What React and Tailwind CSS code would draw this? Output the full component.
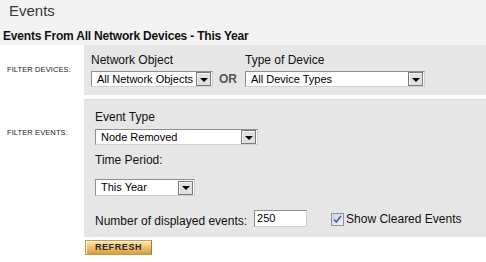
function Arrow() {
  return (
    <span className="flex items-center justify-center w-[15px] h-[14px] border border-[#7a7a7a] bg-[#e0e0e0] shadow-[inset_1px_1px_0_#f7f7f7]">
      <span className="block w-0 h-0 border-l-[4px] border-r-[4px] border-t-[4px] border-l-transparent border-r-transparent border-t-black mt-[1px]"></span>
    </span>
  );
}

function Select({ value, width, height = "h-[16px]" }) {
  return (
    <div className={`flex items-center justify-between bg-white border border-[#8f8f8f] border-b-[#cfcfcf] border-r-[#cfcfcf] pl-[5px] pr-[1px] ${width} ${height}`}>
      <span className="text-[11px] leading-none text-black">{value}</span>
      <Arrow />
    </div>
  );
}

function Label({ children, className = "" }) {
  return <div className={`text-[12px] leading-[14px] text-[#111] ${className}`}>{children}</div>;
}

export default function App() {
  return (
    <div className="w-[486px] h-[262px] bg-white font-['Liberation_Sans',Arial,sans-serif] overflow-hidden">
      <div className="bg-[#f3f3f3] h-[45px] pt-[2px]">
        <div className="pl-[9px] text-[15px] leading-[18px] text-[#3a3a3a]">Events</div>
        <div className="pl-[3px] mt-[9px] text-[12px] leading-[14px] font-bold tracking-[-0.2px] text-[#111]">
          Events From All Network Devices - This Year
        </div>
      </div>

      <div className="flex h-[50px]">
        <div className="w-[84px] flex items-center pl-[7px] text-[7.5px] leading-[8px] tracking-[0.1px] text-[#222]">FILTER DEVICES:</div>
        <div className="flex-1 bg-[#e6e6e6] flex items-end pl-[7px] pb-[8px]">
          <div className="flex flex-col gap-[4px]">
            <Label>Network Object</Label>
            <Select value="All Network Objects" width="w-[122px]" />
          </div>
          <div className="ml-[6px] w-[26px] h-[16px] flex items-center text-[12px] font-bold text-[#555]">OR</div>
          <div className="flex flex-col gap-[4px]">
            <Label>Type of Device</Label>
            <Select value="All Device Types" width="w-[180px]" />
          </div>
        </div>
      </div>

      <div className="flex mt-[4px] h-[138px]">
        <div className="w-[84px] pl-[7px] pt-[30px] text-[7.5px] leading-[8px] tracking-[0.1px] text-[#222]">FILTER EVENTS:</div>
        <div className="flex-1 bg-[#e6e6e6] border-t border-[#dcdcdc] pl-[11px] pt-[10px]">
          <Label>Event Type</Label>
          <div className="mt-[5px]">
            <Select value="Node Removed" width="w-[163px]" />
          </div>
          <Label className="mt-[8px]">Time Period:</Label>
          <div className="mt-[12px]">
            <Select value="This Year" width="w-[100px]" height="h-[17px]" />
          </div>
          <div className="flex items-center mt-[14px] h-[17px]">
            <span className="text-[12px] leading-[14px] text-[#111] mt-[4px]">Number of displayed events:</span>
            <div className="ml-[7px] w-[53px] h-[17px] bg-white border border-[#8f8f8f] border-b-[#cfcfcf] border-r-[#cfcfcf] flex items-center pl-[2px] text-[11px] text-black">
              250
            </div>
            <svg className="ml-[24px] mt-[1px]" width="13" height="13" viewBox="0 0 13 13">
              <defs>
                <linearGradient id="cb" x1="0" y1="0" x2="1" y2="1">
                  <stop offset="0" stopColor="#cfd0dc" />
                  <stop offset="1" stopColor="#f4f4f8" />
                </linearGradient>
              </defs>
              <rect x="0.5" y="0.5" width="12" height="12" fill="url(#cb)" stroke="#8a93a4" />
              <path d="M3 6.5 L5.3 9 L10 3" fill="none" stroke="#3a64ae" strokeWidth="1.6" />
            </svg>
            <span className="ml-[2px] text-[12px] leading-[14px] text-[#111] mt-[1px]">Show Cleared Events</span>
          </div>
        </div>
      </div>

      <div className="pl-[85px] mt-[3px]">
        <div className="w-[67px] h-[15px] flex items-center justify-center bg-gradient-to-b from-[#fbe6b0] via-[#eec36f] to-[#d79d3d] border border-[#c99a4a] border-r-[#a9772c] shadow-[inset_1px_1px_0_#fff3d2]">
          <span className="text-[9px] font-bold tracking-[0.6px] text-[#2a2a2a] leading-none">REFRESH</span>
        </div>
      </div>
    </div>
  );
}
